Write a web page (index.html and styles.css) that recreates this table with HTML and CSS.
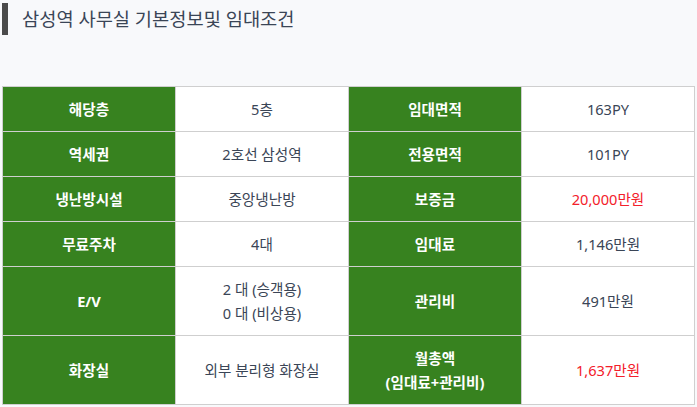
FILE: index.html
```html
<!DOCTYPE html>
<html lang="ko">
<head>
<meta charset="utf-8">
<link rel="stylesheet" href="styles.css">
</head>
<body>
<div class="page">
  <h2 class="title">삼성역 사무실 기본정보및 임대조건</h2>
  <table class="info">
    <tr>
      <th>해당층</th><td>5층</td>
      <th>임대면적</th><td>163PY</td>
    </tr>
    <tr>
      <th>역세권</th><td>2호선 삼성역</td>
      <th>전용면적</th><td>101PY</td>
    </tr>
    <tr>
      <th>냉난방시설</th><td>중앙냉난방</td>
      <th>보증금</th><td class="red">20,000만원</td>
    </tr>
    <tr>
      <th>무료주차</th><td>4대</td>
      <th>임대료</th><td>1,146만원</td>
    </tr>
    <tr>
      <th>E/V</th><td>2 대 (승객용)<br>0 대 (비상용)</td>
      <th>관리비</th><td>491만원</td>
    </tr>
    <tr>
      <th>화장실</th><td>외부 분리형 화장실</td>
      <th>월총액<br>(임대료+관리비)</th><td class="red">1,637만원</td>
    </tr>
  </table>
</div>
</body>
</html>
```
FILE: styles.css
```css
html, body {
  margin: 0;
  padding: 0;
  background: #f8f9fb;
}
.page {
  padding: 3px 0 0 2px;
  font-family: "Noto Sans", "Noto Sans CJK KR", sans-serif;
}
.title {
  margin: 0;
  height: 32px;
  border-left: 6px solid #4b4b4b;
  padding-left: 14px;
  font-size: 18.7px;
  font-weight: normal;
  line-height: 32px;
  color: #3a4556;
}
.info {
  margin-top: 51px;
  width: 693px;
  border-collapse: collapse;
  table-layout: fixed;
  background: #fff;
  font-size: 14.6px;
  line-height: 24px;
}
.info th, .info td {
  border: 1px solid #cfcfcf;
  padding: 10px 4px;
  text-align: center;
  height: 24px;
}
.info th {
  background: #37821f;
  color: #fff;
  font-weight: bold;
}
.info td {
  color: #3a4556;
}
.info td.red {
  color: #f3202a;
}
```
